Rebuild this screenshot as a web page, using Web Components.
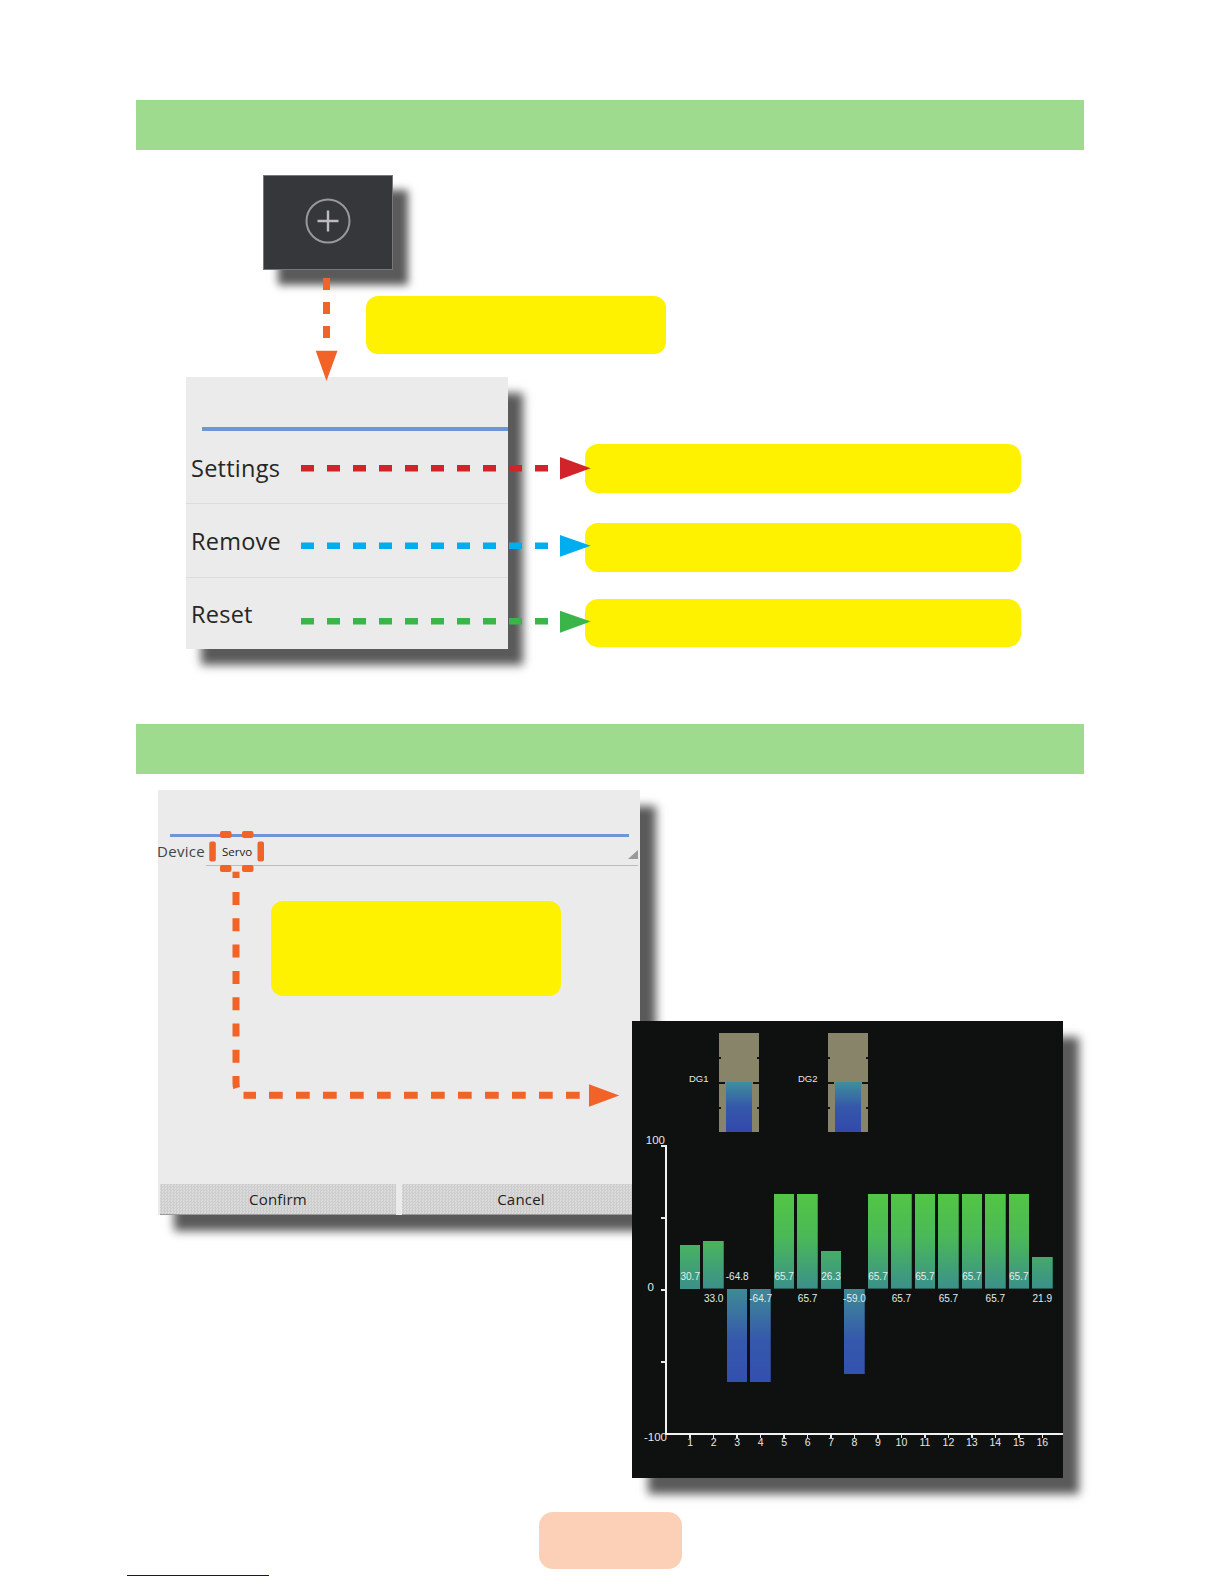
<!DOCTYPE html>
<html lang="en">
<head>
<meta charset="utf-8">
<title>Device settings</title>
<style>
  html, body { margin: 0; background: #fff; }
  body { padding-top: 100px; position: relative; height: 1484px; overflow: hidden; font-family: "Open Sans", sans-serif; }
</style>
</head>
<body>
  <section-bar></section-bar>
  <menu-figure>
    <add-button slot="button"></add-button>
    <note-box slot="note" style="--note-h: 58px; --note-r: 12px"></note-box>
    <popup-menu slot="menu">
      <menu-row style="--row-h: 73px">Settings</menu-row>
      <menu-row style="--row-h: 73.5px">Remove</menu-row>
      <menu-row style="--row-h: 70px" last>Reset</menu-row>
    </popup-menu>
    <note-box slot="side" style="--note-h: 49px"></note-box>
    <note-box slot="side" style="--note-h: 49px; --note-mt: 30px"></note-box>
    <note-box slot="side" style="--note-h: 48px; --note-mt: 27px"></note-box>
  </menu-figure>
  <section-bar></section-bar>
  <device-figure>
    <device-dialog slot="dialog">
      <note-box style="--note-h: 95px; --note-w: 290px; --note-ml: 113px; --note-mt: 35px; --note-r: 12px"></note-box>
    </device-dialog>
    <bar-chart slot="chart"></bar-chart>
  </device-figure>
  <page-foot></page-foot>
  <annotation-layer></annotation-layer>

<script>
class SectionBar extends HTMLElement {
  constructor() {
    super();
    this.attachShadow({ mode: "open" });
    this.shadowRoot.innerHTML = /* html */ `
      <style>
        :host { display: block; height: 50px; margin: 0 140px 0 136px; background: #9edb8f; }
      </style>
    `;
  }
}

class NoteBox extends HTMLElement {
  constructor() {
    super();
    this.attachShadow({ mode: "open" });
    this.shadowRoot.innerHTML = /* html */ `
      <style>
        :host {
          display: block;
          height: var(--note-h, 49px);
          width: var(--note-w, auto);
          margin-top: var(--note-mt, 0);
          margin-left: var(--note-ml, 0);
          background: #fff200;
          border-radius: var(--note-r, 13px);
        }
      </style>
    `;
  }
}

class AddButton extends HTMLElement {
  constructor() {
    super();
    this.attachShadow({ mode: "open" });
    this.shadowRoot.innerHTML = /* html */ `
      <style>
        :host {
          display: flex;
          align-items: center;
          justify-content: center;
          box-sizing: border-box;
          height: 95px;
          padding-bottom: 3px;
          background: #36373b;
          border: 1px solid #77787a;
          box-shadow: 15px 15px 8px #5a5a5a;
        }
        svg { display: block; filter: blur(.4px); }
      </style>
      <svg width="48" height="48" viewBox="0 0 48 48" fill="none" stroke="#98999a">
        <circle cx="24" cy="24" r="21.5" stroke-width="2"/>
        <path d="M24 13.5v21M13.5 24h21" stroke-width="2.4" stroke="#bcbcbc"/>
      </svg>
    `;
  }
}

class PopupMenu extends HTMLElement {
  constructor() {
    super();
    this.attachShadow({ mode: "open" });
    this.shadowRoot.innerHTML = /* html */ `
      <style>
        :host {
          display: block;
          flex: none;
          width: 322px;
          height: 272px;
          padding-top: 50px;
          box-sizing: border-box;
          background: #ebebeb;
          box-shadow: 15px 16px 9px #5a5a5a;
        }
        .rule { height: 4px; margin-left: 16px; background: #6f94d8; }
      </style>
      <div class="rule"></div>
      <slot></slot>
    `;
  }
}

class MenuRow extends HTMLElement {
  constructor() {
    super();
    this.attachShadow({ mode: "open" });
    this.shadowRoot.innerHTML = /* html */ `
      <style>
        :host {
          display: flex;
          align-items: center;
          box-sizing: border-box;
          height: var(--row-h, 71px);
          padding: 2px 0 0 5px;
          border-bottom: 1.5px solid #dcdcdc;
          color: #262626;
          font-size: 23.5px;
          letter-spacing: .25px;
        }
        :host([last]) { border-bottom: 0; }
      </style>
      <slot></slot>
    `;
  }
}

class MenuFigure extends HTMLElement {
  constructor() {
    super();
    this.attachShadow({ mode: "open" });
    this.shadowRoot.innerHTML = /* html */ `
      <style>
        :host { display: block; height: 574px; box-sizing: border-box; padding-top: 25px; }
        .top {
          display: grid;
          grid-template-columns: 103px 27px 273px;
          grid-template-rows: 95px 58px;
          row-gap: 26px;
          margin-left: 263px;
        }
        ::slotted([slot="button"]) { grid-column: 1 / 3; grid-row: 1; }
        ::slotted([slot="note"]) { grid-column: 2 / 4; grid-row: 2; }
        .bottom { display: flex; margin: 23px 203px 0 186px; }
        .side { flex: 1; margin-left: 77px; padding-top: 67px; }
      </style>
      <div class="top">
        <slot name="button"></slot>
        <slot name="note"></slot>
      </div>
      <div class="bottom">
        <slot name="menu"></slot>
        <div class="side"><slot name="side"></slot></div>
      </div>
    `;
  }
}

class DeviceDialog extends HTMLElement {
  constructor() {
    super();
    this.attachShadow({ mode: "open" });
    this.shadowRoot.innerHTML = /* html */ `
      <style>
        :host {
          display: flex;
          flex-direction: column;
          flex: none;
          box-sizing: border-box;
          width: 482px;
          height: 425px;
          padding-top: 44px;
          background: #ebebeb;
          box-shadow: 16px 16px 9px #5a5a5a;
          color: #333;
        }
        .rule { height: 3px; margin: 0 11px 0 12px; background: #6f94d8; }
        .field { display: flex; height: 29px; }
        .label { flex: none; width: 49px; margin-left: -1px; padding-top: 4px; font-size: 15px; line-height: 20px; color: #444; letter-spacing: .3px; }
        .select {
          flex: 1;
          position: relative;
          margin-right: 2px;
          padding: 6px 0 0 16px;
          border-bottom: 1px solid #bcbcbc;
          font-size: 11.5px;
          line-height: 18px;
          color: #222;
        }
        .select svg { position: absolute; right: 0; bottom: 6px; }
        .actions { display: flex; gap: 6px; margin-top: auto; padding-left: 2px; }
        .action {
          flex: 1;
          height: 31px;
          box-sizing: border-box;
          border-bottom: 1px solid #9a9a9a;
          background: repeating-conic-gradient(#cdcdcd 0 25%, #dbdbdb 0 50%) 0 0 / 3px 3px;
          text-align: center;
          font-size: 15px;
          line-height: 30px;
          letter-spacing: .2px;
          color: #222;
        }
        .action:first-child { flex: 0 0 236px; }
      </style>
      <div class="rule"></div>
      <div class="field">
        <div class="label">Device</div>
        <div class="select">Servo
          <svg width="10" height="9" viewBox="0 0 10 9"><path d="M0 9L10 0V9Z" fill="#9a9a9a"/></svg>
        </div>
      </div>
      <slot></slot>
      <div class="actions">
        <div class="action">Confirm</div>
        <div class="action">Cancel</div>
      </div>
    `;
  }
}

class LevelGauge extends HTMLElement {
  constructor() {
    super();
    this.attachShadow({ mode: "open" });
    this.shadowRoot.innerHTML = /* html */ `
      <style>
        :host { display: flex; font: 9.5px/10px "Liberation Sans", sans-serif; color: #e6e6e6; }
        .name { width: 30px; padding-top: 41px; box-sizing: border-box; }
        .tube {
          position: relative;
          display: flex;
          align-items: flex-end;
          justify-content: center;
          width: 40px;
          height: 99px;
          background: #878469;
        }
        .fill { width: 26px; height: 50px; background: linear-gradient(#3e909c, #3557aa 50%, #3349ac); }
        i { position: absolute; height: 1.5px; width: 2px; background: #111; }
        i.l { left: 0; }
        i.r { right: 0; }
        i.mid { width: 6px; }
      </style>
      <div class="name"><slot></slot></div>
      <div class="tube">
        <div class="fill"></div>
        <i class="l" style="top: 24px"></i><i class="r" style="top: 24px"></i>
        <i class="l mid" style="top: 49px"></i><i class="r mid" style="top: 49px"></i>
        <i class="l" style="top: 74px"></i><i class="r" style="top: 74px"></i>
      </div>
    `;
  }
}

class ChartBar extends HTMLElement {
  constructor() {
    super();
    this.attachShadow({ mode: "open" });
  }

  connectedCallback() {
    const value = Number(this.getAttribute("value"));
    const size = Math.abs(value) * 1.44;
    const up = value >= 0;
    const row = this.getAttribute("row");
    this.shadowRoot.innerHTML = /* html */ `
      <style>
        :host {
          display: grid;
          grid-template-rows: 144px 144px;
          position: relative;
          font: 10px/10px "Liberation Sans", sans-serif;
        }
        .half { display: flex; }
        .half.top { align-items: flex-end; }
        .half.bottom { align-items: flex-start; }
        .bar { width: 100%; height: ${size}px; }
        .up { background: linear-gradient(#52c644, #4ab957 45%, #3b908a) bottom / 100% 95px no-repeat; }
        .down { background: linear-gradient(#3e8a96, #3558ac 55%, #334fae) top / 100% 94px no-repeat; }
        .value {
          position: absolute;
          left: -6px;
          right: -6px;
          top: ${row === "top" ? 126.5 : 149}px;
          text-align: center;
          white-space: nowrap;
          color: #e2eeea;
        }
      </style>
      <div class="half top">${up ? '<div class="bar up"></div>' : ""}</div>
      <div class="half bottom">${up ? "" : '<div class="bar down"></div>'}</div>
      <div class="value">${value.toFixed(1)}</div>
    `;
  }
}

class BarChart extends HTMLElement {
  static get data() {
    return [30.7, 33.0, -64.8, -64.7, 65.7, 65.7, 26.3, -59.0, 65.7, 65.7, 65.7, 65.7, 65.7, 65.7, 65.7, 21.9];
  }

  constructor() {
    super();
    this.attachShadow({ mode: "open" });
    // value text alternates between a line above and a line below zero
    const bars = BarChart.data
      .map((v, i) => `<chart-bar value="${v}" row="${i % 2 ? "bottom" : "top"}"></chart-bar>`)
      .join("");
    const ticks = BarChart.data
      .map((v, i) => `<div class="tick"><i></i><span>${i + 1}</span></div>`)
      .join("");
    this.shadowRoot.innerHTML = /* html */ `
      <style>
        :host {
          display: block;
          flex: none;
          position: relative;
          box-sizing: border-box;
          width: 431px;
          height: 457px;
          margin: 231px 0 0 -8px;
          padding-top: 12px;
          background: #0e1110;
          box-shadow: 16px 16px 9px #5a5a5a;
          color: #e8e8e8;
          font-family: "Liberation Sans", sans-serif;
        }
        .gauges { display: flex; gap: 39px; margin-left: 57px; }
        .plot {
          position: relative;
          display: grid;
          grid-template-columns: repeat(16, 20.47px);
          column-gap: 3px;
          height: 288px;
          margin: 13px 0 0 33px;
          padding-left: 13px;
          border-left: 2px solid #f2f2f2;
        }
        .plot b { position: absolute; left: -6px; width: 6px; height: 1.5px; background: #e8e8e8; }
        .plot em { position: absolute; font: normal 11.5px/12px "Liberation Sans", sans-serif; white-space: nowrap; }
        .xaxis {
          display: grid;
          grid-template-columns: repeat(16, 20.47px);
          column-gap: 3px;
          margin-left: 33px;
          padding-left: 15px;
          border-top: 2px solid #f2f2f2;
        }
        .tick { display: flex; flex-direction: column; align-items: center; font-size: 10.5px; line-height: 11px; }
        .tick i { width: 1.5px; height: 3px; margin-bottom: -1px; background: #e8e8e8; }
      </style>
      <div class="gauges">
        <level-gauge>DG1</level-gauge>
        <level-gauge>DG2</level-gauge>
      </div>
      <div class="plot">
        <b style="top: 0"></b><b style="top: 72px"></b><b style="top: 144px"></b><b style="top: 216px"></b>
        <em style="right: calc(100% + 2px); top: -11px">100</em>
        <em style="right: calc(100% + 13px); top: 136px">0</em>
        <em style="right: calc(100% + 0px); top: 286px">-100</em>
        ${bars}
      </div>
      <div class="xaxis">${ticks}</div>
    `;
  }
}

class DeviceFigure extends HTMLElement {
  constructor() {
    super();
    this.attachShadow({ mode: "open" });
    this.shadowRoot.innerHTML = /* html */ `
      <style>
        :host { display: flex; align-items: flex-start; margin-left: 158px; padding-top: 16px; }
      </style>
      <slot name="dialog"></slot>
      <slot name="chart"></slot>
    `;
  }
}

class PageFoot extends HTMLElement {
  constructor() {
    super();
    this.attachShadow({ mode: "open" });
    this.shadowRoot.innerHTML = /* html */ `
      <style>
        :host { display: block; }
        .tab { width: 143px; height: 57px; margin: 34px 0 0 539px; background: #fbd0b7; border-radius: 14px; }
        .rule { width: 142px; height: 1px; margin: 6px 0 0 127px; background: #0a0a8c; }
      </style>
      <div class="tab"></div>
      <div class="rule"></div>
    `;
  }
}

// arrows and dashes lie over the figures, so this one is drawn in page coordinates
class AnnotationLayer extends HTMLElement {
  constructor() {
    super();
    this.attachShadow({ mode: "open" });
    this.shadowRoot.innerHTML = /* html */ `
      <style>
        :host { position: absolute; left: 0; top: 0; width: 1224px; height: 1584px; pointer-events: none; }
        svg { display: block; }
      </style>
      <svg width="1224" height="1584" viewBox="0 0 1224 1584" fill="none">
        <g stroke="#f26327" stroke-width="7">
          <path d="M326.5 278V338" stroke-dasharray="12 12"/>
          <path d="M236 892V1076" stroke-dasharray="13 13.3"/>
          <path d="M236 1076V1083Q236 1086 236.6 1088"/>
          <path d="M243.5 1095.3H256"/>
          <path d="M269 1095.3H581" stroke-dasharray="13.7 13.3"/>
          <path d="M236 871.7V878"/>
        </g>
        <g fill="#f26327">
          <rect x="220" y="831" width="11.5" height="7" rx="2"/>
          <rect x="242" y="831" width="11.5" height="7" rx="2"/>
          <rect x="220" y="865" width="11.5" height="7" rx="2"/>
          <rect x="242" y="865" width="11.5" height="7" rx="2"/>
          <rect x="209.3" y="841.5" width="6.5" height="20" rx="2"/>
          <rect x="257.5" y="841.5" width="6.5" height="20" rx="2"/>
        </g>
        <path d="M315.7 350.7H337.5L326.5 381Z" fill="#f26327"/>
        <path d="M589 1084.3L619.3 1095.5L589 1106.7Z" fill="#f26327"/>
        <path d="M301 468.3H548" stroke="#d2232a" stroke-width="6.6" stroke-dasharray="13 13"/>
        <path d="M560 457L590.7 468.3L560 479.6Z" fill="#d2232a"/>
        <path d="M301 545.7H548" stroke="#00aeef" stroke-width="6.6" stroke-dasharray="13 13"/>
        <path d="M560 535L590.7 545.7L560 556.7Z" fill="#00aeef"/>
        <path d="M301 621.3H548" stroke="#39b54a" stroke-width="6.6" stroke-dasharray="13 13"/>
        <path d="M560 610.7L590.7 621.5L560 632.7Z" fill="#39b54a"/>
      </svg>
    `;
  }
}

customElements.define("section-bar", SectionBar);
customElements.define("note-box", NoteBox);
customElements.define("add-button", AddButton);
customElements.define("popup-menu", PopupMenu);
customElements.define("menu-row", MenuRow);
customElements.define("menu-figure", MenuFigure);
customElements.define("device-dialog", DeviceDialog);
customElements.define("level-gauge", LevelGauge);
customElements.define("chart-bar", ChartBar);
customElements.define("bar-chart", BarChart);
customElements.define("device-figure", DeviceFigure);
customElements.define("page-foot", PageFoot);
customElements.define("annotation-layer", AnnotationLayer);
</script>
</body>
</html>
